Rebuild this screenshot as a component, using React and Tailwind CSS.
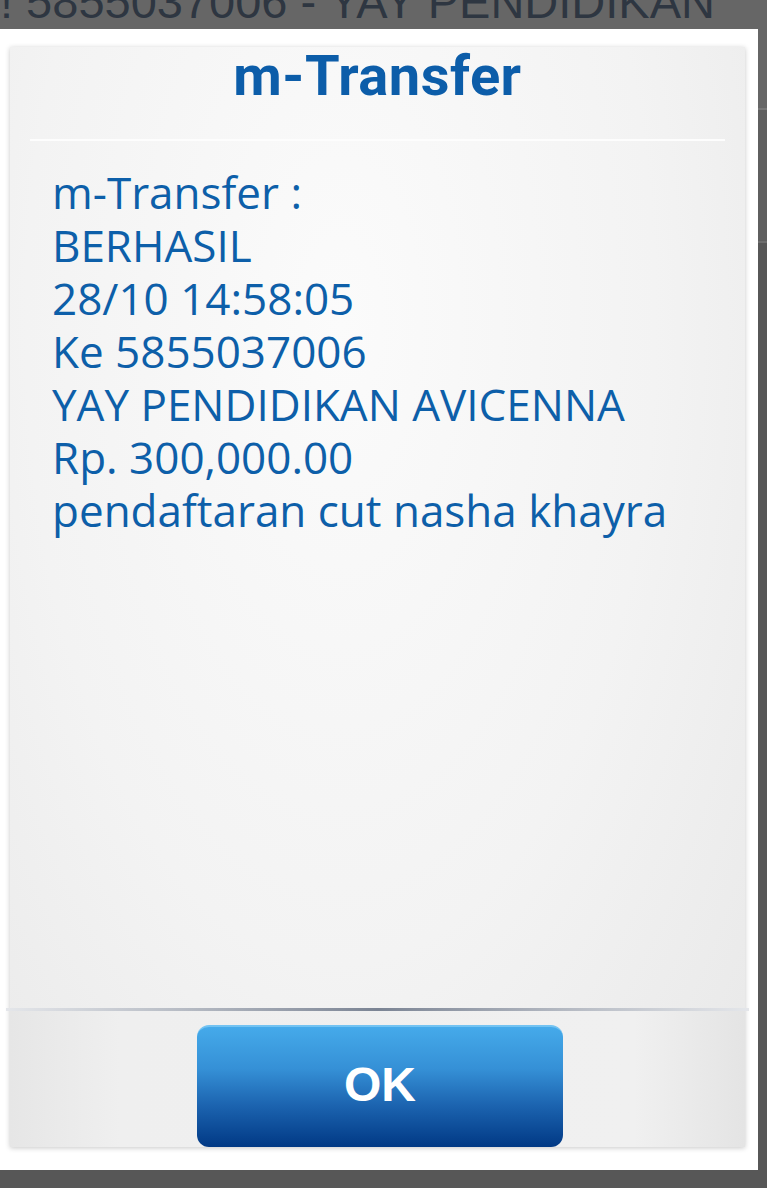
import React from 'react';

const lines = [
  'm-Transfer :',
  'BERHASIL',
  '28/10 14:58:05',
  'Ke 5855037006',
  'YAY PENDIDIKAN AVICENNA',
  'Rp. 300,000.00',
  'pendaftaran cut nasha khayra',
];

export default function App() {
  return (
    <div className="relative w-[767px] h-[1188px] overflow-hidden bg-[#575757] font-['Roboto',sans-serif]">
      {/* page behind the dialog */}
      <div className="flex flex-col">
        <div className="h-[110px] bg-[#666666] border-b-2 border-[#777777]">
          <div className="-mt-[26px] whitespace-nowrap text-[47px] leading-[56px] text-[#2e3641] font-['Liberation_Sans',sans-serif]">
            ! 5855037006 - YAY PENDIDIKAN
          </div>
        </div>
        <div className="h-[133px] bg-[#5f5f5f] border-b-2 border-[#6e6e6e]" />
      </div>

      {/* dialog */}
      <div className="absolute left-0 top-[29px] w-[758px] h-[1141px] bg-white pl-[10px] pt-[18px] pr-[13px] pb-[23px]">
        <div className="flex flex-col h-full shadow-[0_1px_5px_rgba(0,0,0,0.22)] bg-[radial-gradient(ellipse_at_45%_25%,#fbfbfb_0%,#f3f3f3_55%,#e8e8e8_100%)]">
          <div className="h-[92px] pt-[1px] text-center">
            <span className="text-[56px] leading-[56px] font-bold text-[#0c5da9] tracking-[0.5px]">m-Transfer</span>
          </div>
          <div className="h-[2px] mx-[20px] bg-[#fdfdfd]" />

          <div className="flex-1 pt-[25px] pl-[42px] font-['Open_Sans',sans-serif]">
            {lines.map((l) => (
              <div key={l} className="text-[44px] leading-[53px] text-[#0d5fa9] whitespace-nowrap">
                {l}
              </div>
            ))}
          </div>

          <div className="h-[3px] -mx-[4px] bg-[linear-gradient(90deg,#e4e6ea_0%,#b4b9c2_25%,#7b8494_50%,#b4b9c2_75%,#e4e6ea_100%)]" />
          <div className="pt-[14px] flex justify-center bg-[linear-gradient(90deg,#e6e6e6_0%,#efefef_15%,#f0f0f0_85%,#e4e4e4_100%)]">
            <div className="ml-[5px] w-[366px] h-[122px] rounded-[12px] border-t-2 border-[#73c3f2] bg-[linear-gradient(180deg,#45aaea_0%,#3590d6_35%,#1c64b0_65%,#013985_100%)] flex items-center justify-center">
              <span className="text-[48px] font-bold text-white font-['Liberation_Sans',sans-serif] -mt-[4px]">OK</span>
            </div>
          </div>
        </div>
      </div>
    </div>
  );
}
